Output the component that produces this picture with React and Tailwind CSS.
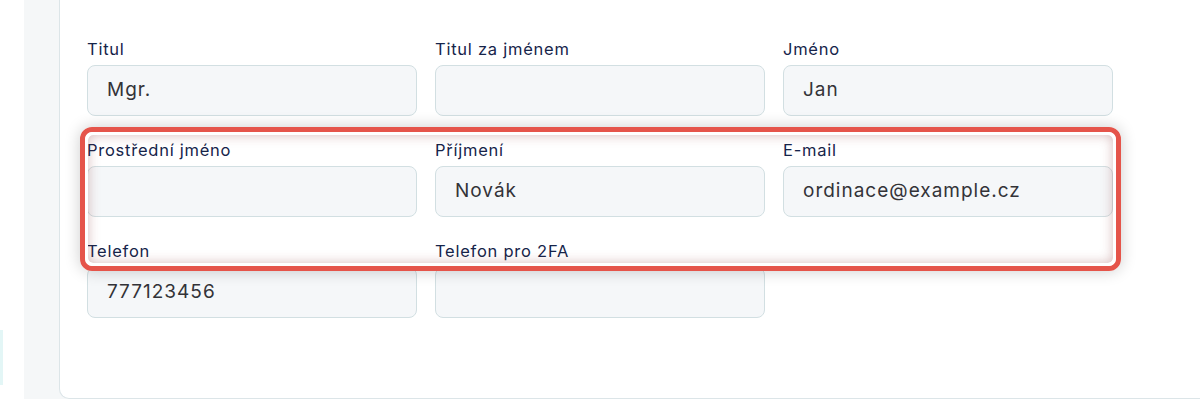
import React from "react";

const rows = [
  [
    { label: "Titul", value: "Mgr." },
    { label: "Titul za jménem", value: "" },
    { label: "Jméno", value: "Jan" },
  ],
  [
    { label: "Prostřední jméno", value: "" },
    { label: "Příjmení", value: "Novák" },
    { label: "E-mail", value: "ordinace@example.cz" },
  ],
  [
    { label: "Telefon", value: "777123456" },
    { label: "Telefon pro 2FA", value: "" },
  ],
];

function Field({ label, value }) {
  return (
    <div className="flex flex-col">
      <label className="text-[16.5px] leading-[24px] text-[#16244a] mb-[4px] tracking-[0.75px]">
        {label}
      </label>
      <div className="h-[51px] rounded-[8px] border border-[#d2dfe2] bg-[#f5f7f9] flex items-center pl-[19px] text-[19px] text-[#333338] tracking-[1px]">
        {value}
      </div>
    </div>
  );
}

export default function App() {
  return (
    <div
      className="w-[1200px] h-[399px] overflow-hidden flex bg-white"
      style={{ fontFamily: "Inter, 'Noto Sans', sans-serif" }}
    >
      <div className="w-[24px] shrink-0 bg-white flex flex-col">
        <div className="h-[330px]" />
        <div className="w-[3px] h-[55px] bg-[#e3f6f6]" />
      </div>
      <div className="flex-1 bg-[#f5f7f8] pl-[35px]">
        <div className="relative w-[1200px] h-[399px] bg-white border-l border-b border-[#dce5e8] rounded-bl-[10px] pl-[27px] pt-[37px]">
          <div className="grid grid-cols-[330px_330px_330px] gap-x-[18px] gap-y-[22px]">
            {rows.flat().map((f) => (
              <Field key={f.label} {...f} />
            ))}
          </div>
          <div className="absolute left-[20px] top-[127px] w-[1041px] h-[144px] rounded-[12px] border-[5px] border-[#e5544a] shadow-[0_0_16px_rgba(0,0,0,0.2)] pointer-events-none">
            <div className="w-full h-full rounded-[8px] border-[3px] border-white shadow-[inset_0_0_12px_rgba(140,60,60,0.35)]" />
          </div>
        </div>
      </div>
    </div>
  );
}
